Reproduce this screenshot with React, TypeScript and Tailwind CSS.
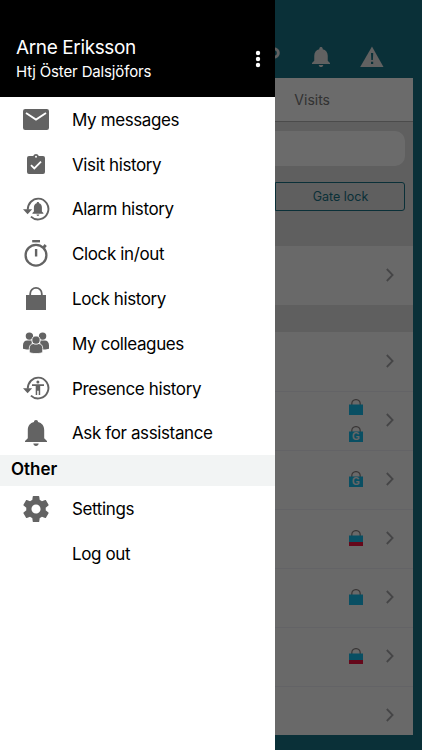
import React from "react";

type TLock = "plain" | "gate" | "low";

type TMenuItem = {
  label: string;
  icon: React.ReactNode;
};

const visitRows: TLock[][] = [
  ["plain", "gate"],
  ["gate"],
  ["low"],
  ["plain"],
  ["low"],
];

const bellPath =
  "M12 22c1.1 0 2-.9 2-2h-4c0 1.1.9 2 2 2zm6-6v-5c0-3.07-1.63-5.64-4.5-6.32V4c0-.83-.67-1.5-1.5-1.5s-1.5.67-1.5 1.5v.68C7.64 5.36 6 7.92 6 11v5l-2 2v1h16v-1l-2-2z";

function HistoryRing() {
  return (
    <>
      <path
        d="M4.7 12.7C4.9 6.3 9.6 1.6 15.2 1.6a10.4 10.4 0 1 1-7.3 18"
        fill="none"
        stroke="currentColor"
        strokeWidth="1.9"
      />
      <path d="M0 12.3h9.2L4.6 17.2z" />
    </>
  );
}

function MailIcon() {
  return (
    <svg width="26" height="21" viewBox="0 0 26 21" fill="currentColor">
      <rect width="26" height="21" rx="2.2" />
      <path
        d="M3 4l10 6.6L23 4"
        fill="none"
        stroke="white"
        strokeWidth="1.9"
      />
    </svg>
  );
}

function ClipboardIcon() {
  return (
    <svg width="18" height="20" viewBox="0 0 18 20" fill="currentColor">
      <path d="M2 2h4.2a3 3 0 0 1 5.6 0H16a2 2 0 0 1 2 2v14a2 2 0 0 1-2 2H2a2 2 0 0 1-2-2V4a2 2 0 0 1 2-2z" />
      <circle cx="9" cy="2.7" r="1" fill="white" />
      <path
        d="M4 11.2l3.3 3.2L14 7.7"
        fill="none"
        stroke="white"
        strokeWidth="1.8"
      />
    </svg>
  );
}

function AlarmHistoryIcon() {
  return (
    <svg width="27" height="24" viewBox="0 0 27 24" fill="currentColor">
      <HistoryRing />
      <path d="M14.9 5.1c.8 0 1.2.5 1.2 1.2 1.8.6 2.8 2.1 2.8 4.2v4l1.5 1.5v.7H9.4V16l1.5-1.5v-4c0-2.1 1-3.6 2.8-4.2 0-.7.4-1.2 1.2-1.2zM13.5 17.5h2.8c0 .9-.6 1.4-1.4 1.4s-1.4-.5-1.4-1.4z" />
    </svg>
  );
}

function PresenceHistoryIcon() {
  return (
    <svg width="27" height="24" viewBox="0 0 27 24" fill="currentColor">
      <HistoryRing />
      <circle cx="14.9" cy="6" r="1.5" />
      <path d="M9 8.2h12v1.7h-3.8v9.2h-1.5v-4.4h-1.5v4.4h-1.5V9.9H9z" />
    </svg>
  );
}

function StopwatchIcon() {
  return (
    <svg width="24" height="27" viewBox="0 0 24 27" fill="currentColor">
      <rect x="8.2" y="0" width="7.8" height="2.4" />
      <path d="M18.6 6.4l2-2.3 2.2 2-2 2.3z" />
      <circle
        cx="12"
        cy="15.2"
        r="10.4"
        fill="none"
        stroke="currentColor"
        strokeWidth="2.3"
      />
      <rect x="10.9" y="9" width="2.4" height="7.5" />
    </svg>
  );
}

function PadlockIcon() {
  return (
    <svg width="20" height="23" viewBox="0 0 20 23" fill="currentColor">
      <rect y="8" width="20" height="15" />
      <path
        d="M4.2 8.5V6.7a5.8 5.8 0 0 1 11.6 0v1.8"
        fill="none"
        stroke="currentColor"
        strokeWidth="1.8"
      />
    </svg>
  );
}

function PeopleIcon() {
  return (
    <svg width="26" height="22" viewBox="0 0 26 22" fill="currentColor">
      <circle cx="6.4" cy="4.1" r="3.7" />
      <circle cx="19.6" cy="4.1" r="3.7" />
      <path d="M0 16.8v-3.6C0 10 1.8 8.4 4 8.4h4.8v9C5 17.8 2 17.6 0 16.8zM26 16.8v-3.6c0-3.2-1.8-4.8-4-4.8h-4.8v9c3.8.4 6.8.2 8.8-.6z" />
      <path
        d="M6.3 20.3v-4c0-3.2 2-4.7 4.3-4.7h4.8c2.3 0 4.3 1.5 4.3 4.7v4c-1.8 1.7-11.6 1.7-13.4 0z"
        stroke="white"
        strokeWidth=".8"
      />
      <circle cx="13" cy="8.1" r="4.1" stroke="white" strokeWidth=".8" />
    </svg>
  );
}

function BellIcon() {
  return (
    <svg width="22" height="26" viewBox="0 0 22 26" fill="currentColor">
      <path d="M11 0c1.3 0 2 .8 2 2.1 4 .9 6.2 4 6.2 8.2v8l2.8 2.6v1H0v-1l2.8-2.6v-8C2.8 6.1 5 3 9 2.1 9 .8 9.7 0 11 0zM8.3 23.5h5.4c-.2 1.5-1.2 2.5-2.7 2.5s-2.5-1-2.7-2.5z" />
    </svg>
  );
}

function GearIcon() {
  return (
    <svg width="26" height="26" viewBox="2.2 2 19.6 20" fill="currentColor">
      <path d="M19.43 12.98c.04-.32.07-.64.07-.98s-.03-.66-.07-.98l2.11-1.65c.19-.15.24-.42.12-.64l-2-3.46c-.12-.22-.39-.3-.61-.22l-2.49 1c-.52-.4-1.08-.73-1.69-.98l-.38-2.65C14.46 2.18 14.25 2 14 2h-4c-.25 0-.46.18-.49.42l-.38 2.65c-.61.25-1.17.59-1.69.98l-2.49-1c-.23-.09-.49 0-.61.22l-2 3.46c-.13.22-.07.49.12.64l2.11 1.65c-.04.32-.07.65-.07.98s.03.66.07.98l-2.11 1.65c-.19.15-.24.42-.12.64l2 3.46c.12.22.39.3.61.22l2.49-1c.52.4 1.08.73 1.69.98l.38 2.65c.03.24.24.42.49.42h4c.25 0 .46-.18.49-.42l.38-2.65c.61-.25 1.17-.59 1.69-.98l2.49 1c.23.09.49 0 .61-.22l2-3.46c.12-.22.07-.49-.12-.64l-2.11-1.65zM12 15.5c-1.93 0-3.5-1.57-3.5-3.5s1.57-3.5 3.5-3.5 3.5 1.57 3.5 3.5-1.57 3.5-3.5 3.5z" />
    </svg>
  );
}

function Chevron() {
  return (
    <svg
      width="8"
      height="14"
      viewBox="0 0 8 14"
      className="mr-[19px] shrink-0"
    >
      <path
        d="M.8 1l5.8 6-5.8 6"
        fill="none"
        stroke="#a4a4a8"
        strokeWidth="1.8"
      />
    </svg>
  );
}

function LockBadge({ kind }: { kind: TLock }) {
  return (
    <svg width="14" height="16" viewBox="0 0 14 16">
      <path
        d="M2.8 6V4.8a4.2 4.2 0 0 1 8.4 0V6"
        fill="none"
        stroke="#8c8686"
        strokeWidth="1.3"
      />
      <rect y="5.5" width="14" height="10.5" fill="#17bdec" />
      {kind === "low" && <rect y="12" width="14" height="4" fill="#f0123f" />}
      {kind === "gate" && (
        <text
          x="7"
          y="14.3"
          textAnchor="middle"
          fontSize="10"
          fontWeight="700"
          fill="#f4f4f4"
          fontFamily="Liberation Sans, sans-serif"
        >
          G
        </text>
      )}
    </svg>
  );
}

const menuItems: TMenuItem[] = [
  { label: "My messages", icon: <MailIcon /> },
  { label: "Visit history", icon: <ClipboardIcon /> },
  { label: "Alarm history", icon: <AlarmHistoryIcon /> },
  { label: "Clock in/out", icon: <StopwatchIcon /> },
  { label: "Lock history", icon: <PadlockIcon /> },
  { label: "My colleagues", icon: <PeopleIcon /> },
  { label: "Presence history", icon: <PresenceHistoryIcon /> },
  { label: "Ask for assistance", icon: <BellIcon /> },
];

const otherItems: TMenuItem[] = [
  { label: "Settings", icon: <GearIcon /> },
  { label: "Log out", icon: null },
];

function MenuRow({ item }: { item: TMenuItem }) {
  return (
    <li className="flex h-[44.8px] items-center">
      <span className="flex w-[72px] justify-center text-[#636363]">
        {item.icon}
      </span>
      <span className="pt-px text-[17px] leading-6 tracking-[-0.38px] whitespace-nowrap text-black">
        {item.label}
      </span>
    </li>
  );
}

function VisitsPage() {
  return (
    <div className="flex h-full flex-col bg-[#187285] pr-[9px] pb-[15px]">
      <header className="flex h-[78px] shrink-0 items-end justify-end pr-[29px] pb-[11px] text-[#e6e6e6]">
        <svg
          width="12"
          height="12"
          viewBox="0 0 12 12"
          className="mr-8 mb-2"
        >
          <circle
            cx="6"
            cy="6"
            r="4.3"
            fill="none"
            stroke="currentColor"
            strokeWidth="3"
          />
        </svg>
        <svg
          width="18"
          height="20"
          viewBox="4 2.5 16 19.5"
          preserveAspectRatio="none"
          fill="currentColor"
          className="mr-[30px]"
        >
          <path d={bellPath} />
        </svg>
        <svg width="24" height="21" viewBox="0 0 24 21" fill="currentColor">
          <path d="M12 .5L23.5 21H.2z" />
          <path d="M11 7h2.2l-.3 7h-1.6zM11 15.7h2.2V18H11z" fill="#187285" />
        </svg>
      </header>
      <main className="flex grow flex-col overflow-hidden bg-[#e2e2e2]">
        <div className="flex h-11 shrink-0 items-center justify-end border-b border-[#b4b4b4] bg-white pr-[83px] text-[14px] text-[#777777]">
          Visits
        </div>
        <div className="mt-[9px] mr-2 h-[35px] shrink-0 rounded-[10px] bg-white"></div>
        <div className="mt-4 mr-2 flex h-[29px] shrink-0 justify-end">
          <div className="flex w-[130px] items-center justify-center rounded-r-[3px] border border-[#187285] pt-px pl-px text-[12.5px] text-[#187285]">
            Gate lock
          </div>
        </div>
        <div className="mt-[35px] flex h-[59px] shrink-0 items-center justify-end bg-[#fbfbfb] pb-0.5">
          <Chevron />
        </div>
        <div className="mt-[27px] flex h-[60px] shrink-0 items-center justify-end border-b border-[#ebebf3] bg-[#fbfbfb] pb-0.5">
          <Chevron />
        </div>
        {visitRows.map((locks, i) => (
          <div
            key={i}
            className="flex h-[59px] shrink-0 items-center justify-end border-b border-[#ebebf3] bg-[#fbfbfb] pb-0.5"
          >
            <div className="mr-[23px] flex flex-col gap-[11px]">
              {locks.map((kind) => (
                <LockBadge key={kind} kind={kind} />
              ))}
            </div>
            <Chevron />
          </div>
        ))}
        <div className="flex h-[59px] shrink-0 items-center justify-end bg-[#fbfbfb] pb-[3px]">
          <Chevron />
        </div>
      </main>
    </div>
  );
}

function Drawer() {
  return (
    <aside className="absolute inset-y-0 left-0 w-[275px] bg-white">
      <div className="flex h-[97px] items-end justify-between bg-black pr-[14px] pl-4 text-white">
        <div className="pb-[15px]">
          <h1 className="text-[19px] leading-[26px] tracking-[-0.38px]">
            Arne Eriksson
          </h1>
          <p className="pt-px text-[15px] leading-5 tracking-[-0.14px]">
            Htj Öster Dalsjöfors
          </p>
        </div>
        <svg
          width="6"
          height="18"
          viewBox="0 0 6 18"
          fill="currentColor"
          className="mb-[29px]"
        >
          <circle cx="3" cy="3" r="2.2" />
          <circle cx="3" cy="9" r="2.2" />
          <circle cx="3" cy="15" r="2.2" />
        </svg>
      </div>
      <ul>
        {menuItems.map((item) => (
          <MenuRow key={item.label} item={item} />
        ))}
      </ul>
      <h2 className="h-[31px] bg-[#f2f4f4] pl-[11px] text-[17px] leading-[28px] font-semibold text-black">
        Other
      </h2>
      <ul>
        {otherItems.map((item) => (
          <MenuRow key={item.label} item={item} />
        ))}
      </ul>
    </aside>
  );
}

export default function App() {
  return (
    <div className="relative h-[750px] w-[422px] overflow-hidden font-['Inter',sans-serif]">
      <VisitsPage />
      <div className="absolute inset-0 bg-black/58"></div>
      <Drawer />
    </div>
  );
}
